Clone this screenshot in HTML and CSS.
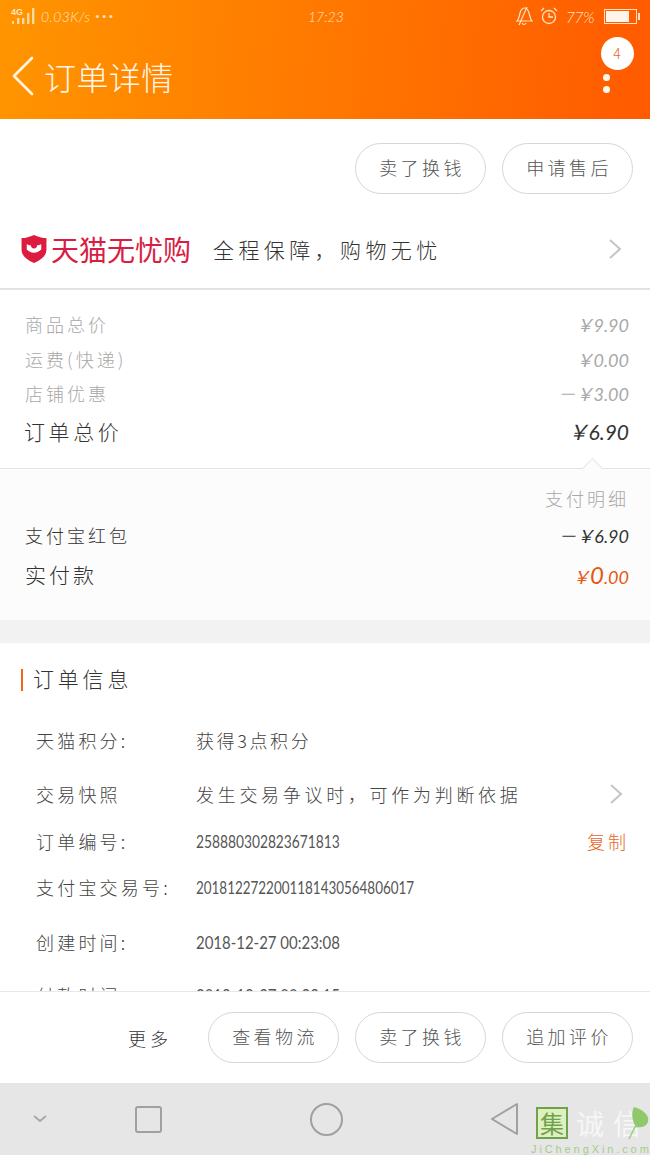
FILE: index.html
```html
<!DOCTYPE html>
<html lang="zh-CN">

<head>
    <meta charset="UTF-8">
    <meta name="viewport" content="width=device-width, initial-scale=1.0">
    <title>订单详情</title>
    <link rel="stylesheet" href="styles.css">
</head>

<body>
    <header class="top">
        <div class="status">
            <div class="status-left">
                <svg class="signal" width="24" height="18" viewBox="0 0 24 18">
                    <text x="0" y="8" class="signal-label">4G</text>
                    <rect x="1" y="14" width="2" height="3" fill="#ffd9a0" />
                    <rect x="6" y="11" width="2.4" height="6" fill="#ffd9a0" />
                    <rect x="11" y="11" width="2.4" height="6" fill="#ffd9a0" />
                    <rect x="16" y="6" width="2.4" height="11" fill="#ffd9a0" />
                    <rect x="21" y="1" width="2.4" height="16" fill="#ffd9a0" />
                </svg>
                <span class="speed">0.03K/s</span>
                <span class="dots">•••</span>
            </div>
            <span class="clock">17:23</span>
            <div class="status-right">
                <svg width="18" height="20" viewBox="0 0 18 20" fill="none" stroke="#ffe3c4" stroke-width="1.2">
                    <path d="M2 15c2-2 2-4 3-8s3-5 5-5 3 2 4 5 1 6 3 8z" />
                    <path d="M7 17c1 2 3 2 4 0" />
                    <path d="M12 1 4 19" />
                </svg>
                <svg width="18" height="18" viewBox="0 0 18 18" fill="none" stroke="#ffe3c4" stroke-width="1.3">
                    <circle cx="9" cy="10" r="6.5" />
                    <path d="M9 6v4h4M1 4l3-3M17 4l-3-3" />
                </svg>
                <span class="percent">77%</span>
                <div class="battery">
                    <div class="battery-fill"></div>
                </div>
            </div>
        </div>
        <div class="title-bar">
            <svg class="back" width="24" height="40" viewBox="0 0 24 40" fill="none" stroke="#fff4e6" stroke-width="2.6" stroke-linecap="round" stroke-linejoin="round">
                <path d="M21 2 3 20l18 18" />
            </svg>
            <h1 class="page-title">订单详情</h1>
            <div class="more">
                <span class="badge">4</span>
                <span class="more-dot"></span>
                <span class="more-dot"></span>
            </div>
        </div>
    </header>

    <main class="content">
        <section class="actions">
            <a class="pill">卖了换钱</a>
            <a class="pill">申请售后</a>
        </section>

        <section class="guarantee">
            <svg class="shield" width="26" height="28" viewBox="0 0 24 27">
                <path d="M12 0c4 2 8 3 12 3v11c0 6-5 10-12 13C5 24 0 20 0 14V3c4 0 8-1 12-3z" fill="#dc1b3f" />
                <path d="M5 9c2 1 3 1 4 1 0 2 1 3 3 3s3-1 3-3c1 0 2 0 4-1v5c-2 2-4 3-7 3s-5-1-7-3z" fill="#fff" />
            </svg>
            <span class="guarantee-name">天猫无忧购</span>
            <span class="guarantee-text">全程保障，购物无忧</span>
            <svg class="chevron" width="14" height="20" viewBox="0 0 14 20" fill="none" stroke="#c4c4c4" stroke-width="2">
                <path d="m2 1 10 9-10 9" />
            </svg>
        </section>

        <section class="prices">
            <div class="price-row muted"><span>商品总价</span><span class="num">￥9.90</span></div>
            <div class="price-row muted"><span>运费(快递)</span><span class="num">￥0.00</span></div>
            <div class="price-row muted"><span>店铺优惠</span><span class="num">－￥3.00</span></div>
            <div class="price-row total"><span>订单总价</span><span class="num">￥6.90</span></div>
        </section>

        <section class="payment">
            <span class="notch"></span>
            <div class="pay-detail">支付明细</div>
            <div class="price-row pay-row"><span>支付宝红包</span><span class="num">－￥6.90</span></div>
            <div class="price-row paid"><span>实付款</span><span class="num paid-num">￥<b>0</b>.00</span></div>
        </section>

        <section class="info">
            <h2 class="info-title">订单信息</h2>
            <div class="info-row row-a"><span class="info-key">天猫积分:</span><span class="info-value">获得3点积分</span></div>
            <div class="info-row row-b">
                <span class="info-key">交易快照</span><span class="info-value">发生交易争议时，可作为判断依据</span>
                <svg class="chevron" width="14" height="20" viewBox="0 0 14 20" fill="none" stroke="#c4c4c4" stroke-width="2">
                    <path d="m2 1 10 9-10 9" />
                </svg>
            </div>
            <div class="info-row row-c"><span class="info-key">订单编号:</span><span class="info-value digits">258880302823671813</span><a class="copy">复制</a></div>
            <div class="info-row row-d"><span class="info-key">支付宝交易号:</span><span class="info-value digits">2018122722001181430564806017</span></div>
            <div class="info-row row-e"><span class="info-key">创建时间:</span><span class="info-value digits">2018-12-27 00:23:08</span></div>
            <div class="info-row row-f"><span class="info-key">付款时间:</span><span class="info-value digits">2018-12-27 00:23:15</span></div>
        </section>
    </main>

    <footer class="bottom">
        <span class="more-link">更多</span>
        <a class="pill">查看物流</a>
        <a class="pill">卖了换钱</a>
        <a class="pill">追加评价</a>
    </footer>

    <nav class="nav">
        <svg class="nav-down" width="14" height="8" viewBox="0 0 14 8" fill="none" stroke="#a8a8a8" stroke-width="2">
            <path d="m1 1 6 5 6-5" />
        </svg>
        <span class="nav-square"></span>
        <span class="nav-circle"></span>
        <svg class="nav-back" width="30" height="34" viewBox="0 0 30 34" fill="none" stroke="#a0a0a0" stroke-width="2" stroke-linejoin="round">
            <path d="M27 2v30L2 17z" />
        </svg>
        <div class="mark">
            <div class="mark-top">
                <span class="mark-box">集</span>
                <span class="mark-name">诚信</span>
            </div>
            <div class="mark-url">JiChengXin.com</div>
            <svg class="mark-leaf" width="22" height="34" viewBox="0 0 22 34">
                <path d="M6 0c8 2 16 8 14 15-2 5-8 6-12 5C4 14 3 6 6 0z" fill="#8fc96b" />
                <path d="M8 18 1 32" stroke="#9ccf7b" stroke-width="1.5" fill="none" />
            </svg>
        </div>
    </nav>
</body>

</html>
```

FILE: styles.css
```css
* {
    box-sizing: border-box;
}

html,
body {
    margin: 0;
    padding: 0;
}

body {
    width: 650px;
    height: 1155px;
    display: flex;
    flex-direction: column;
    overflow: hidden;
    background-color: #fff;
    color: #333;
    font-family: "Noto Sans CJK SC", "Noto Sans", sans-serif;
    font-weight: 300;
}

/* top orange area */
.top {
    height: 119px;
    flex: none;
    color: #fff;
    background: linear-gradient(95deg, #ff9500 0%, #ff7800 50%, #ff5a00 100%);
}

.status {
    height: 33px;
    display: flex;
    align-items: center;
    justify-content: space-between;
    padding: 0 10px 1px 11px;
    position: relative;
    color: #ffe3c4;
}

.status-left,
.status-right {
    display: flex;
    align-items: center;
}

.signal {
    margin-right: 6px;
}

.signal-label {
    font-family: "Liberation Sans", sans-serif;
    font-size: 9px;
    font-weight: bold;
    fill: #ffe3c4;
}

.speed,
.clock,
.percent {
    font-family: "Lato", "Liberation Sans", sans-serif;
    font-style: italic;
    font-weight: 300;
    font-size: 14px;
}

.speed {
    letter-spacing: 0.4px;
}

.dots {
    font-family: "Liberation Sans", sans-serif;
    font-size: 11px;
    letter-spacing: 3px;
    margin-left: 5px;
}

.clock {
    position: absolute;
    left: 308px;
    top: 8px;
}

.status-right svg {
    margin-right: 7px;
}

.percent {
    margin: 0 10px 0 1px;
    font-size: 16px;
    letter-spacing: -0.6px;
}

.battery {
    position: relative;
    width: 33px;
    height: 15px;
    border: 1px solid #ffe3c4;
    padding: 1px;
    margin-right: 3px;
}

.battery::after {
    content: "";
    position: absolute;
    right: -4px;
    top: 3px;
    width: 2px;
    height: 7px;
    background-color: #ffe3c4;
}

.battery-fill {
    width: 23px;
    height: 100%;
    background-color: #fff3ea;
}

.title-bar {
    height: 86px;
    display: flex;
    align-items: center;
    padding: 0 0 0 8px;
    position: relative;
}

.back {
    margin: 0 9px 0 3px;
}

.page-title {
    margin: 0;
    font-size: 32px;
    line-height: 44px;
    letter-spacing: 0.4px;
    font-weight: 300;
    color: #fff6ea;
}

.more {
    position: absolute;
    right: 16px;
    top: 4px;
    width: 34px;
    display: flex;
    flex-direction: column;
    align-items: center;
}

.badge {
    width: 33px;
    height: 33px;
    border-radius: 50%;
    background-color: #fff;
    color: #e8652a;
    font-size: 14px;
    line-height: 33px;
    text-align: center;
    margin-bottom: 2px;
}

.more-dot {
    width: 7px;
    height: 7px;
    border-radius: 50%;
    background-color: #fff6ea;
    margin: 2px 0 3px -21px;
}

/* scrolling page */
.content {
    flex: 1;
    min-height: 0;
    overflow: hidden;
}

.actions {
    height: 100px;
    display: flex;
    justify-content: flex-end;
    gap: 16px;
    padding: 24px 17px 0 0;
}

.pill {
    width: 131px;
    height: 51px;
    border: 1px solid #d6d6d6;
    border-radius: 26px;
    background-color: #fff;
    color: #555;
    font-size: 18px;
    letter-spacing: 3.4px;
    line-height: 47px;
    padding-left: 3px;
    text-align: center;
}

.guarantee {
    height: 71px;
    display: flex;
    align-items: center;
    padding: 0 28px 9px 21px;
    border-bottom: 2px solid #e2e2e2;
}

.shield {
    margin-right: 4px;
}

.guarantee-name {
    font-size: 28px;
    line-height: 36px;
    color: #d81e42;
    font-weight: 400;
    margin-right: 22px;
}

.guarantee-text {
    flex: 1;
    font-size: 21px;
    letter-spacing: 4.4px;
    color: #333;
}

/* price block */
.prices {
    height: 178px;
    padding: 17px 21px 0 25px;
}

.price-row {
    height: 34.5px;
    display: flex;
    align-items: center;
    justify-content: space-between;
    font-size: 18px;
    letter-spacing: 3px;
}

.muted {
    color: #a8a8a8;
}

.num {
    font-family: "Lato", "Noto Sans CJK SC", sans-serif;
    font-style: italic;
    font-weight: 400;
    letter-spacing: 0;
}

.total {
    height: 38px;
    margin: 1px 0 0 -1px;
    font-size: 21px;
    letter-spacing: 3.6px;
    color: #333;
}

.payment {
    height: 152px;
    position: relative;
    border-top: 1px solid #e4e4e4;
    background-color: #fcfcfc;
    padding: 11px 21px 0 25px;
}

.notch {
    position: absolute;
    right: 50px;
    top: -8px;
    width: 15px;
    height: 15px;
    border-top: 1px solid #e4e4e4;
    border-left: 1px solid #e4e4e4;
    background-color: #fcfcfc;
    transform: rotate(45deg);
}

.pay-detail {
    height: 36px;
    line-height: 36px;
    text-align: right;
    font-size: 18px;
    letter-spacing: 3px;
    color: #a8a8a8;
}

.pay-row {
    height: 36px;
    margin-top: 1px;
    color: #333;
}

.paid {
    height: 42px;
    font-size: 21px;
    color: #333;
}

.paid-num {
    color: #e8560f;
    font-size: 18px;
}

.paid-num b {
    font-size: 24px;
    font-weight: 400;
}

/* order info */
.info {
    border-top: 23px solid #f2f2f2;
    padding: 0 24px 0 35px;
}

.info-title {
    position: relative;
    margin: 0 0 0 -2px;
    height: 73px;
    line-height: 70px;
    font-size: 21px;
    font-weight: 300;
    letter-spacing: 3.8px;
    color: #333;
}

.info-title::before {
    content: "";
    position: absolute;
    left: -12px;
    top: 26px;
    width: 2px;
    height: 22px;
    background-color: #f0661f;
}

.info-row {
    display: flex;
    align-items: center;
    font-size: 18px;
    letter-spacing: 2.6px;
    color: #444;
}

.row-a {
    height: 48px;
}

.row-b {
    height: 60px;
}

.row-b .info-value {
    letter-spacing: 3.7px;
}

.row-b .chevron {
    margin-right: 3px;
}

.row-c {
    height: 34px;
}

.row-d {
    height: 58px;
}

.row-e {
    height: 52px;
}

.row-f {
    height: 54px;
}

.info-key {
    width: 160px;
    margin-left: 1px;
    flex: none;
    letter-spacing: 3.2px;
    white-space: nowrap;
}

.info-value {
    flex: 1;
    white-space: nowrap;
}

/* the numbers in the shot are tall and narrow */
.digits {
    font-family: "Lato", sans-serif;
    font-weight: 400;
    letter-spacing: 0;
    font-size: 17px;
    color: #555;
    transform: scaleX(0.81);
    transform-origin: left center;
}

.row-d .digits {
    transform: scaleX(0.79);
}

.row-e .digits,
.row-f .digits {
    transform: scaleX(0.88);
}

.copy {
    color: #e8661f;
    letter-spacing: 3px;
    margin-right: -3px;
}

/* bottom buttons */
.bottom {
    height: 92px;
    flex: none;
    display: flex;
    align-items: center;
    justify-content: flex-end;
    gap: 16px;
    padding-right: 17px;
    border-top: 1px solid #e8e8e8;
    background-color: #fff;
}

.more-link {
    font-size: 18px;
    letter-spacing: 4px;
    color: #333;
    margin-right: 20px;
}

/* android nav bar */
.nav {
    height: 72px;
    flex: none;
    position: relative;
    display: flex;
    align-items: center;
    background-color: #e6e6e6;
    padding-left: 33px;
}

.nav-down {
    margin-right: 88px;
}

.nav-square {
    width: 27px;
    height: 27px;
    border: 2px solid #a0a0a0;
    border-radius: 3px;
    margin-right: 148px;
}

.nav-circle {
    width: 33px;
    height: 33px;
    border: 2px solid #a0a0a0;
    border-radius: 50%;
    margin-right: 147px;
}

/* watermark over the nav bar */
.mark {
    position: absolute;
    left: 530px;
    top: 24px;
    width: 120px;
}

.mark-top {
    display: flex;
    align-items: center;
    gap: 8px;
}

.mark-box {
    width: 32px;
    height: 32px;
    border: 2px solid #6fa24f;
    background-color: #dff0bf;
    color: #6fa24f;
    font-size: 24px;
    font-weight: 400;
    line-height: 27px;
    text-align: center;
    margin-left: 6px;
}

.mark-name {
    font-size: 28px;
    line-height: 30px;
    letter-spacing: 9px;
    color: #f6f6f6;
    font-weight: 400;
    white-space: nowrap;
}

.mark-url {
    font-family: "Liberation Sans", sans-serif;
    font-size: 11px;
    line-height: 13px;
    letter-spacing: 2.9px;
    color: #a5cc8c;
    margin: 4px 0 0 1px;
    white-space: nowrap;
}

.mark-leaf {
    position: absolute;
    right: 0;
    top: 0;
}
```
